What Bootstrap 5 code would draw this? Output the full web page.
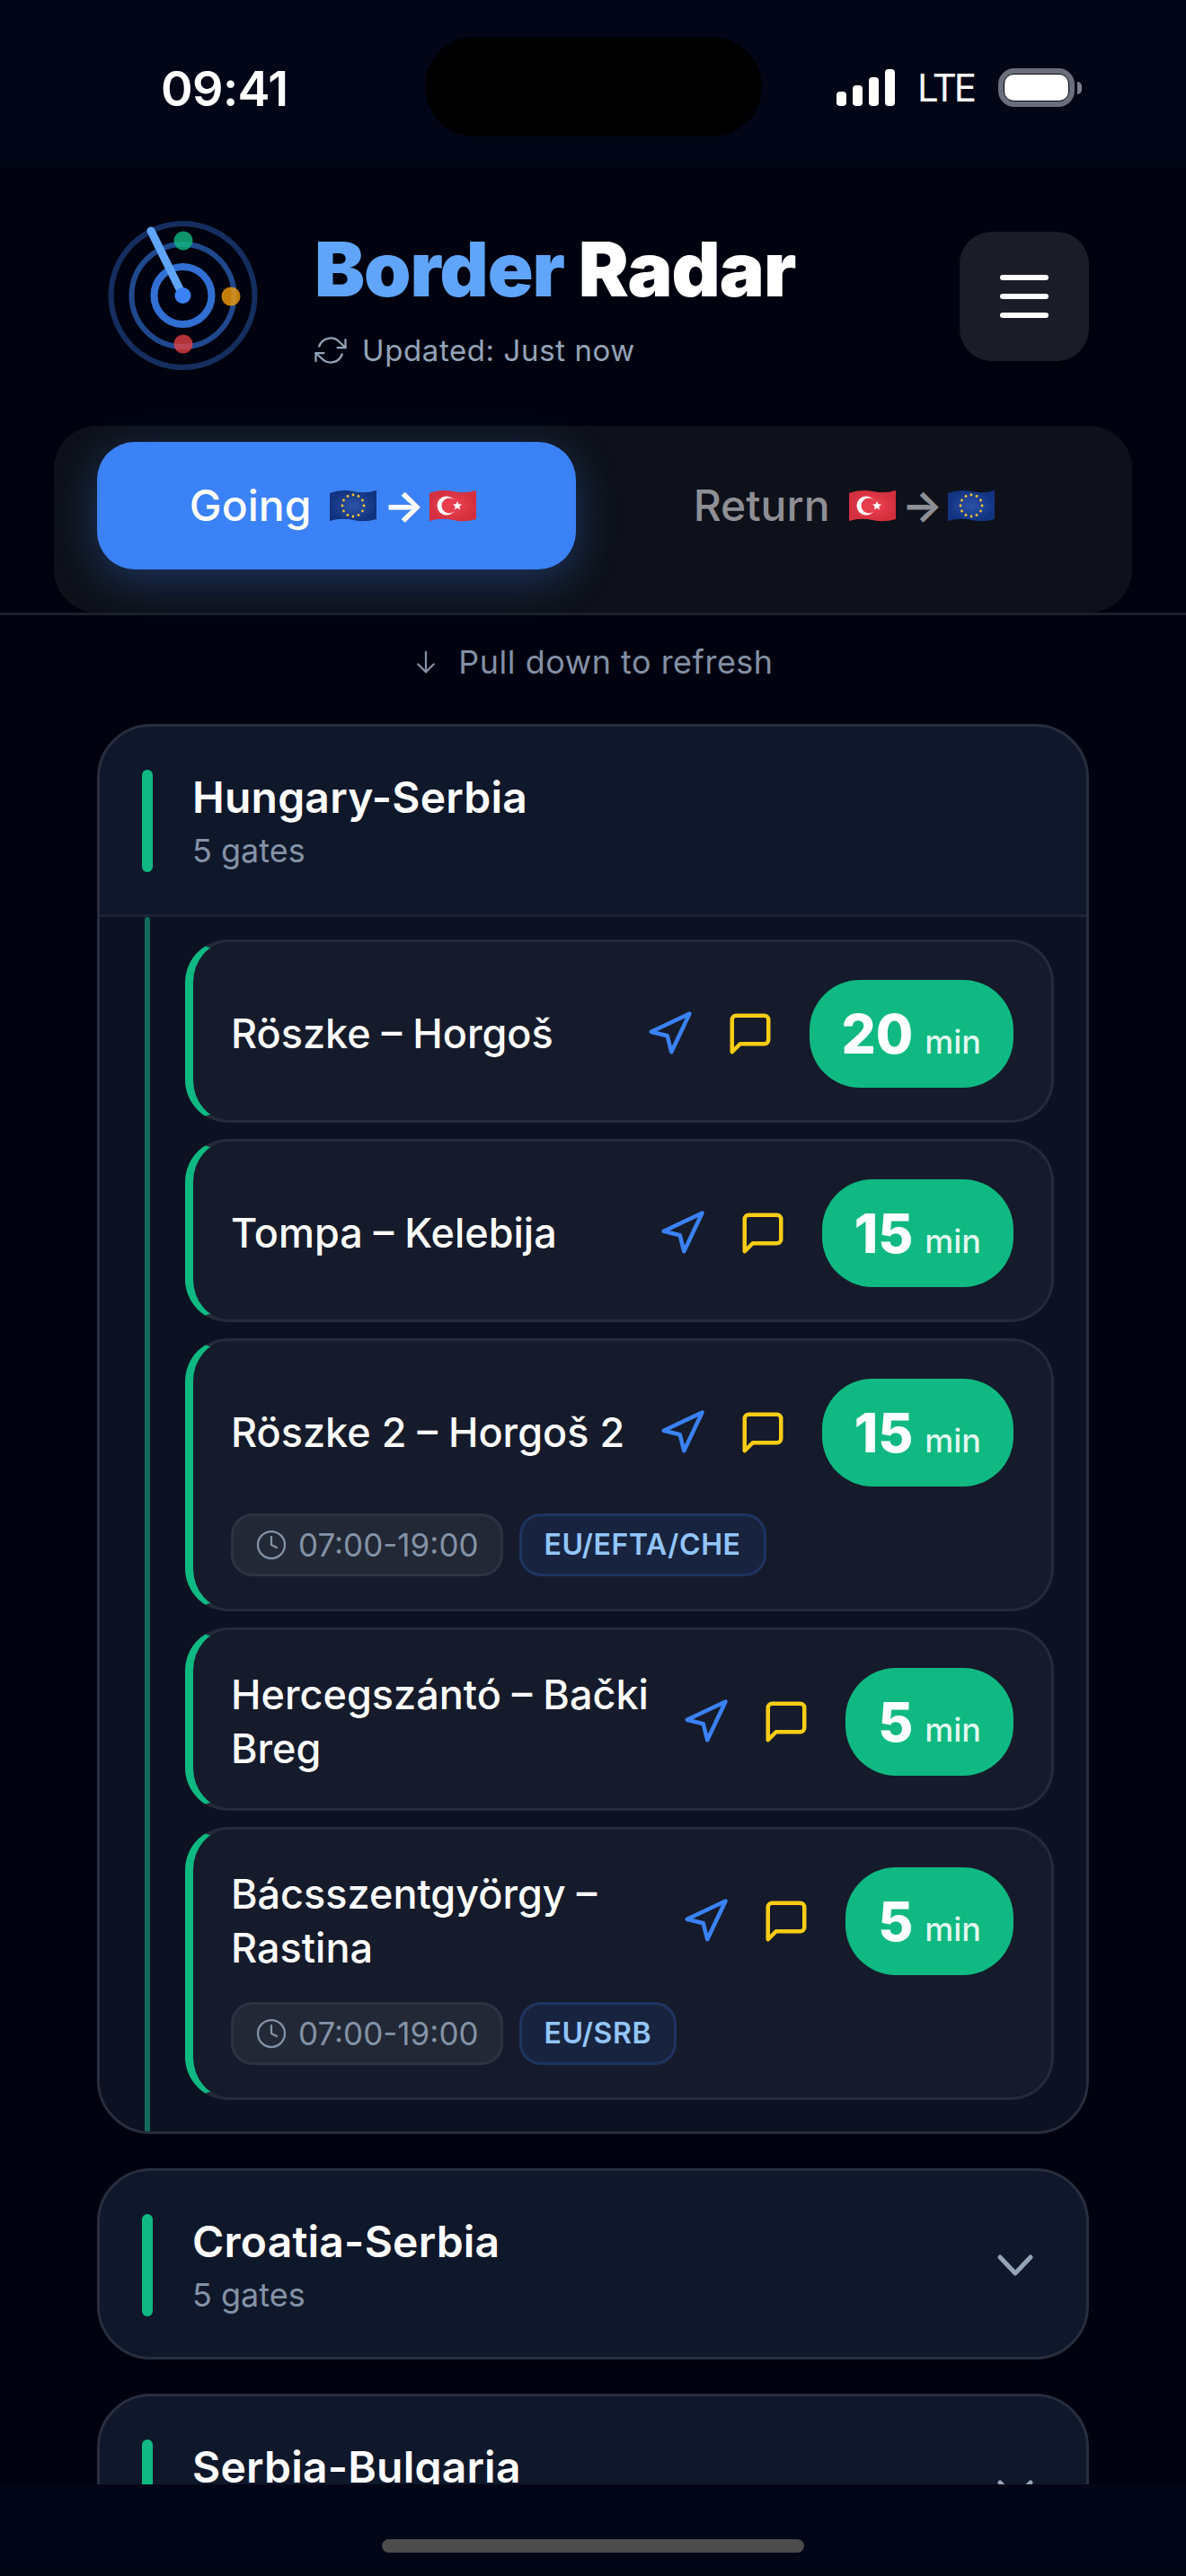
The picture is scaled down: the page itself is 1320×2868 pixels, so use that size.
<!DOCTYPE html>
<html lang="en">
<head>
    <meta charset="UTF-8">
    <meta name="viewport" content="width=device-width, initial-scale=1.0">
    <title>Border Radar</title>
    <link href="https://cdn.jsdelivr.net/npm/bootstrap@5.3.2/dist/css/bootstrap.min.css" rel="stylesheet">
    <style>
        html, body { background: #00030f; }
        body { font-family: Inter, "Liberation Sans", sans-serif; color: #fff; }
        .screen { width: 1320px; height: 2868px; overflow: hidden; }

        .status-bar { height: 186px; background: #020617; padding: 41px 116px 0 179px; }
        .status-time { width: 294px; font-size: 54px; font-weight: 600; line-height: 115px; height: 111px; letter-spacing: -.6px; }
        .island { width: 375px; height: 111px; border-radius: 56px; background: #000; }
        .status-right { margin-left: auto; margin-top: 35px; height: 43px; }
        .signal { gap: 7px; height: 41px; margin-right: 25px; }
        .signal i { width: 11px; background: #fff; border-radius: 4px; display: block; }
        .lte { font-size: 42px; font-weight: 400; line-height: 43px; letter-spacing: -3px; margin-right: 27px; }
        .battery { width: 85px; height: 43px; border: 6px solid #6b6e7b; border-radius: 18px; padding: 1px; }
        .battery i { display: block; width: 100%; height: 100%; background: #fff; border-radius: 10px; }
        .battery-nub { width: 5px; height: 14px; background: #7a7d88; border-radius: 0 5px 5px 0; margin-left: 3px; }

        .app-header { padding: 54px 60px 0; border-bottom: 3px solid #1c1f2a; background: #00030f; }
        .brand-row { height: 180px; padding: 0 48px; }
        .brand-text { margin-left: 52px; padding-top: 18px; align-self: flex-start; }
        .brand-title { font-size: 84px; font-weight: 900; line-height: 84px; letter-spacing: -1px; margin: 0; }
        .brand-title span { color: #60a5fa; }
        .brand-sub { font-size: 33px; line-height: 48px; margin-top: 24px; color: #94a3b8; letter-spacing: .6px; }
        .brand-sub svg { margin-right: 17px; }
        .menu-btn { width: 144px; height: 144px; border-radius: 36px; background: #1a1d27; border: 0; margin-left: auto; gap: 15px; padding: 0; }
        .menu-btn i { display: block; width: 54px; height: 6px; border-radius: 3px; background: #fff; }

        .dir-tabs { margin-top: 54px; height: 208px; background: #0e1119; border-radius: 48px; padding: 18px 53px 0 48px; gap: 32px; }
        .dir-tab { width: 533px; height: 142px; border-radius: 42px; border: 0; background: transparent; color: #8e8f95; font-size: 48px; font-weight: 500; padding: 0; }
        .dir-tab.active { background: #3b82f6; color: #fff; box-shadow: 0 12px 48px rgba(59, 130, 246, .32); padding-right: 8px; }
        .dir-tab .flag-a { margin-left: 21px; }
        .dir-tab .arrow-mid { margin: 0 6px 0 7px; font-weight: 700; }

        .content { height: 2081px; overflow: hidden; padding: 28px 108px 0; }
        .pull-hint { height: 48px; line-height: 48px; font-size: 36px; color: #8390a5; letter-spacing: .5px; margin-bottom: 45px; gap: 21px; }

        .region-card { background: #0f172a; border: 3px solid #272e3f; border-radius: 60px; margin-bottom: 38px; overflow: hidden; }
        .region-head { padding: 48px 46px 45px 47px; }
        .region-card.open .region-head { border-bottom: 3px solid #1b2336; padding-bottom: 47px; }
        .region-bar { width: 12px; height: 114px; background: #10b981; border-radius: 6px; margin-right: 44px; flex: none; }
        .region-name { font-size: 48px; font-weight: 600; line-height: 62px; letter-spacing: .2px; }
        .region-count { font-size: 36px; line-height: 48px; margin-top: 4px; color: #8492a6; }
        .chevron { margin-left: auto; margin-right: 13px; }

        .region-body { background: #0c1222; padding: 0 36px 0 50px; }
        .body-line { width: 6px; background: #136a59; border-radius: 3px 3px 0 0; margin-right: 39px; flex: none; }
        .gate-list { padding: 25px 0 35px; gap: 18px; }
        .gate { background: #151b2b; border: 3px solid #252b3a; border-left: 9px solid #10b981; border-radius: 48px; padding: 42px 42px 36px; }
        .gate-name { font-size: 45px; font-weight: 500; line-height: 60px; padding-right: 24px; }
        .gate-icon { width: 54px; height: 54px; flex: none; fill: none; stroke-width: 2; stroke-linecap: round; stroke-linejoin: round; }
        .icon-nav { stroke: #3b82f6; margin-right: 36px; }
        .icon-msg { stroke: #facc15; margin-right: 39px; }
        .wait-pill { height: 120px; border-radius: 56px; background: #10b981; padding: 0 36px; flex: none; gap: 13px; }
        .wait-num { font-size: 60px; font-weight: 800; line-height: 120px; }
        .wait-unit { font-size: 36px; font-weight: 500; color: rgba(255, 255, 255, .88); }
        .tag-row { margin-top: 30px; gap: 18px; }
        .info-tag { height: 70px; border-radius: 24px; padding: 0 24px; font-size: 35px; border: 3px solid; }
        .tag-hours { background: #222836; border-color: #2d3342; color: #8492a6; gap: 12px; }
        .tag-zone { background: #18243f; border-color: #1f3461; color: #93c5fd; font-weight: 600; font-size: 32px; letter-spacing: .6px; padding: 0 25px; }

        .home-bar { height: 101px; background: #020617; padding-top: 61px; }
        .home-bar i { display: block; width: 470px; height: 15px; border-radius: 8px; background: #4c4c4c; }
    </style>
</head>
<body>
    <svg width="0" height="0" class="d-block">
        <defs>
            <radialGradient id="g-eu"><stop offset="0" stop-color="#2c52a8"/><stop offset="1" stop-color="#12337f"/></radialGradient>
            <radialGradient id="g-tr"><stop offset="0" stop-color="#ee4656"/><stop offset="1" stop-color="#d42f3e"/></radialGradient>
            <symbol id="i-nav" viewBox="0 0 24 24"><polygon points="3 11 22 2 13 21 11 13 3 11"/></symbol>
            <symbol id="i-msg" viewBox="0 0 24 24"><path d="M21 15a2 2 0 0 1-2 2H7l-4 4V5a2 2 0 0 1 2-2h14a2 2 0 0 1 2 2z"/></symbol>
            <symbol id="i-clock" viewBox="0 0 24 24"><circle cx="12" cy="12" r="10"/><polyline points="12 6 12 12 16 14"/></symbol>
            <symbol id="flag-eu" viewBox="0 0 52 38">
                <path d="M0 5Q13 0 26 3T52 2V34Q39 38 26 35T0 36Z" fill="url(#g-eu)"/>
                <g fill="#f4c430">
                    <circle cx="26" cy="7" r="1.400"/><circle cx="32" cy="8.500" r="1.400"/><circle cx="36.500" cy="13" r="1.400"/><circle cx="38" cy="19" r="1.400"/><circle cx="36.500" cy="25" r="1.400"/><circle cx="32" cy="29.500" r="1.400"/><circle cx="26" cy="31" r="1.400"/><circle cx="20" cy="29.500" r="1.400"/><circle cx="15.500" cy="25" r="1.400"/><circle cx="14" cy="19" r="1.400"/><circle cx="15.500" cy="13" r="1.400"/><circle cx="20" cy="8.500" r="1.400"/>
                </g>
            </symbol>
            <symbol id="flag-tr" viewBox="0 0 52 38">
                <path d="M0 5Q13 0 26 3T52 2V34Q39 38 26 35T0 36Z" fill="url(#g-tr)"/>
                <circle cx="19" cy="19" r="10.500" fill="#fff"/>
                <circle cx="22" cy="19" r="8.500" fill="#e63e4d"/>
                <polygon points="31,14 32.400,17.300 36,17.600 33.300,20 34.100,23.500 31,21.600 27.900,23.500 28.700,20 26,17.600 29.600,17.300" fill="#fff"/>
            </symbol>
        </defs>
    </svg>

    <div class="screen d-flex flex-column">
        <div class="status-bar d-flex align-items-start">
            <div class="status-time">09:41</div>
            <div class="island"></div>
            <div class="status-right d-flex align-items-center">
                <div class="signal d-flex align-items-end">
                    <i style="height: 16px"></i><i style="height: 23px"></i><i style="height: 32px"></i><i style="height: 41px"></i>
                </div>
                <div class="lte">LTE</div>
                <div class="battery"><i></i></div>
                <div class="battery-nub"></div>
            </div>
        </div>

        <header class="app-header">
            <div class="brand-row d-flex align-items-center">
                <svg width="190" height="180" viewBox="0 0 190 180" fill="none">
                    <circle cx="95.500" cy="89" r="80" stroke="#3b82f6" stroke-opacity=".35" stroke-width="6"/>
                    <circle cx="95.500" cy="89" r="57" stroke="#3b82f6" stroke-opacity=".55" stroke-width="6"/>
                    <circle cx="95.500" cy="89" r="32" stroke="#3b82f6" stroke-opacity=".85" stroke-width="8"/>
                    <line x1="95.500" y1="89" x2="60" y2="17" stroke="#60a5fa" stroke-width="9" stroke-linecap="round"/>
                    <circle cx="95.500" cy="89" r="9" fill="#3b82f6"/>
                    <circle cx="96" cy="28" r="10.500" fill="#10b981" fill-opacity=".8"/>
                    <circle cx="149" cy="90" r="10.500" fill="#f59e0b" fill-opacity=".8"/>
                    <circle cx="96" cy="143" r="10.500" fill="#ef4444" fill-opacity=".75"/>
                </svg>
                <div class="brand-text">
                    <h1 class="brand-title"><span>Border</span> Radar</h1>
                    <div class="brand-sub d-flex align-items-center">
                        <svg width="36" height="36" viewBox="0 0 24 24" fill="none" stroke="#94a3b8" stroke-width="1.500" stroke-linecap="round" stroke-linejoin="round"><polyline points="23 4 23 10 17 10"/><polyline points="1 20 1 14 7 14"/><path d="M3.510 9a9 9 0 0 1 14.850-3.360L23 10M1 14l4.640 4.360A9 9 0 0 0 20.490 15"/></svg>
                        Updated: Just now
                    </div>
                </div>
                <button class="menu-btn d-flex flex-column align-items-center justify-content-center" aria-label="Menu"><i></i><i></i><i></i></button>
            </div>

            <div class="dir-tabs d-flex">
                <button class="dir-tab active d-flex align-items-center justify-content-center">
                    Going
                    <svg class="flag-a" width="52" height="38"><use href="#flag-eu"/></svg>
                    <span class="arrow-mid">→</span>
                    <svg width="52" height="38"><use href="#flag-tr"/></svg>
                </button>
                <button class="dir-tab d-flex align-items-center justify-content-center">
                    Return
                    <svg class="flag-a" width="52" height="38"><use href="#flag-tr"/></svg>
                    <span class="arrow-mid">→</span>
                    <svg width="52" height="38"><use href="#flag-eu"/></svg>
                </button>
            </div>
        </header>

        <main class="content">
            <div class="pull-hint d-flex align-items-center justify-content-center">
                <svg width="30" height="30" viewBox="0 0 24 24" fill="none" stroke="#8390a5" stroke-width="1.800" stroke-linecap="round" stroke-linejoin="round"><line x1="12" y1="3" x2="12" y2="21"/><polyline points="5 14 12 21 19 14"/></svg>
                <span>Pull down to refresh</span>
            </div>

            <section class="region-card open">
                <div class="region-head d-flex align-items-start">
                    <div class="region-bar"></div>
                    <div>
                        <div class="region-name">Hungary-Serbia</div>
                        <div class="region-count">5 gates</div>
                    </div>
                </div>
                <div class="region-body d-flex">
                    <div class="body-line"></div>
                    <div class="gate-list flex-grow-1 d-flex flex-column">

                        <div class="gate">
                            <div class="d-flex align-items-center">
                                <div class="gate-name flex-grow-1">Röszke – Horgoš</div>
                                <svg class="gate-icon icon-nav"><use href="#i-nav"/></svg>
                                <svg class="gate-icon icon-msg"><use href="#i-msg"/></svg>
                                <div class="wait-pill d-flex align-items-baseline"><span class="wait-num">20</span><span class="wait-unit">min</span></div>
                            </div>
                        </div>

                        <div class="gate">
                            <div class="d-flex align-items-center">
                                <div class="gate-name flex-grow-1">Tompa – Kelebija</div>
                                <svg class="gate-icon icon-nav"><use href="#i-nav"/></svg>
                                <svg class="gate-icon icon-msg"><use href="#i-msg"/></svg>
                                <div class="wait-pill d-flex align-items-baseline"><span class="wait-num">15</span><span class="wait-unit">min</span></div>
                            </div>
                        </div>

                        <div class="gate">
                            <div class="d-flex align-items-center">
                                <div class="gate-name flex-grow-1">Röszke 2 – Horgoš 2</div>
                                <svg class="gate-icon icon-nav"><use href="#i-nav"/></svg>
                                <svg class="gate-icon icon-msg"><use href="#i-msg"/></svg>
                                <div class="wait-pill d-flex align-items-baseline"><span class="wait-num">15</span><span class="wait-unit">min</span></div>
                            </div>
                            <div class="tag-row d-flex">
                                <div class="info-tag tag-hours d-flex align-items-center">
                                    <svg width="36" height="36" fill="none" stroke="#8492a6" stroke-width="1.500" stroke-linecap="round" stroke-linejoin="round"><use href="#i-clock"/></svg>
                                    07:00-19:00
                                </div>
                                <div class="info-tag tag-zone d-flex align-items-center">EU/EFTA/CHE</div>
                            </div>
                        </div>

                        <div class="gate">
                            <div class="d-flex align-items-center">
                                <div class="gate-name flex-grow-1">Hercegszántó – Bački Breg</div>
                                <svg class="gate-icon icon-nav"><use href="#i-nav"/></svg>
                                <svg class="gate-icon icon-msg"><use href="#i-msg"/></svg>
                                <div class="wait-pill d-flex align-items-baseline"><span class="wait-num">5</span><span class="wait-unit">min</span></div>
                            </div>
                        </div>

                        <div class="gate">
                            <div class="d-flex align-items-center">
                                <div class="gate-name flex-grow-1">Bácsszentgyörgy – Rastina</div>
                                <svg class="gate-icon icon-nav"><use href="#i-nav"/></svg>
                                <svg class="gate-icon icon-msg"><use href="#i-msg"/></svg>
                                <div class="wait-pill d-flex align-items-baseline"><span class="wait-num">5</span><span class="wait-unit">min</span></div>
                            </div>
                            <div class="tag-row d-flex">
                                <div class="info-tag tag-hours d-flex align-items-center">
                                    <svg width="36" height="36" fill="none" stroke="#8492a6" stroke-width="1.500" stroke-linecap="round" stroke-linejoin="round"><use href="#i-clock"/></svg>
                                    07:00-19:00
                                </div>
                                <div class="info-tag tag-zone d-flex align-items-center">EU/SRB</div>
                            </div>
                        </div>

                    </div>
                </div>
            </section>

            <section class="region-card">
                <div class="region-head d-flex align-items-center">
                    <div class="region-bar"></div>
                    <div>
                        <div class="region-name">Croatia-Serbia</div>
                        <div class="region-count">5 gates</div>
                    </div>
                    <svg class="chevron" width="40" height="24" viewBox="0 0 40 24" fill="none" stroke="#94a3b8" stroke-width="5" stroke-linecap="round" stroke-linejoin="round"><polyline points="3 3 20 21 37 3"/></svg>
                </div>
            </section>

            <section class="region-card">
                <div class="region-head d-flex align-items-center">
                    <div class="region-bar"></div>
                    <div>
                        <div class="region-name">Serbia-Bulgaria</div>
                        <div class="region-count">5 gates</div>
                    </div>
                    <svg class="chevron" width="40" height="24" viewBox="0 0 40 24" fill="none" stroke="#94a3b8" stroke-width="5" stroke-linecap="round" stroke-linejoin="round"><polyline points="3 3 20 21 37 3"/></svg>
                </div>
            </section>
        </main>

        <div class="home-bar d-flex justify-content-center"><i></i></div>
    </div>

    <script src="https://cdn.jsdelivr.net/npm/bootstrap@5.3.2/dist/js/bootstrap.bundle.min.js"></script>
</body>
</html>
